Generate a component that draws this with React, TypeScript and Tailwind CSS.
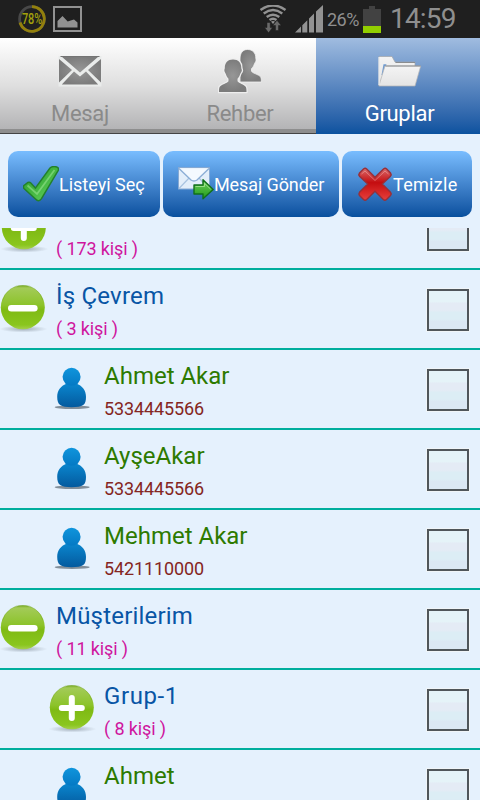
import type { ReactNode } from "react"

type Row = {
  kind: "plus" | "minus" | "person"
  title: string
  sub: string
  nested?: boolean
}

const rows: Row[] = [
  { kind: "plus", title: "", sub: "( 173 kişi )" },
  { kind: "minus", title: "İş Çevrem", sub: "( 3 kişi )" },
  { kind: "person", title: "Ahmet Akar", sub: "5334445566", nested: true },
  { kind: "person", title: "AyşeAkar", sub: "5334445566", nested: true },
  { kind: "person", title: "Mehmet Akar", sub: "5421110000", nested: true },
  { kind: "minus", title: "Müşterilerim", sub: "( 11 kişi )" },
  { kind: "plus", title: "Grup-1", sub: "( 8 kişi )", nested: true },
  { kind: "person", title: "Ahmet", sub: "", nested: true },
]

// Gradients shared by all the icons
const Defs = () => (
  <svg width="0" height="0" className="absolute">
    <defs>
      <linearGradient id="green" x1="0" y1="0" x2="0" y2="1">
        <stop offset="0" stopColor="#72a51c" />
        <stop offset="0.06" stopColor="#a3cb58" />
        <stop offset="0.45" stopColor="#8cc32a" />
        <stop offset="0.55" stopColor="#7fba14" />
        <stop offset="0.9" stopColor="#8ac61e" />
        <stop offset="1" stopColor="#a5d04e" />
      </linearGradient>
      <linearGradient id="blue" x1="0" y1="0" x2="0" y2="1">
        <stop offset="0" stopColor="#0a86ce" />
        <stop offset="1" stopColor="#045a9e" />
      </linearGradient>
      <linearGradient id="head" x1="0" y1="0" x2="0" y2="1">
        <stop offset="0" stopColor="#0f95dc" />
        <stop offset="1" stopColor="#0579c4" />
      </linearGradient>
      <linearGradient id="check" x1="0" y1="0" x2="1" y2="1">
        <stop offset="0" stopColor="#2f9f2f" />
        <stop offset="0.5" stopColor="#43b541" />
        <stop offset="1" stopColor="#6bd866" />
      </linearGradient>
      <linearGradient id="arrow" x1="0" y1="0" x2="0" y2="1">
        <stop offset="0" stopColor="#6fd05a" />
        <stop offset="1" stopColor="#1f9a1c" />
      </linearGradient>
      <linearGradient id="red" x1="0" y1="0" x2="0" y2="1">
        <stop offset="0" stopColor="#d96a6a" />
        <stop offset="0.45" stopColor="#c40d10" />
        <stop offset="1" stopColor="#e8403c" />
      </linearGradient>
      <linearGradient id="paper" x1="0" y1="0" x2="0" y2="1">
        <stop offset="0" stopColor="#f4f4f4" />
        <stop offset="1" stopColor="#e4e4e4" />
      </linearGradient>
      <radialGradient id="shadow">
        <stop offset="0" stopColor="#5c6874" stopOpacity="0.5" />
        <stop offset="1" stopColor="#5c6874" stopOpacity="0" />
      </radialGradient>
      <radialGradient id="gray">
        <stop offset="0" stopColor="#979797" />
        <stop offset="1" stopColor="#7c7c7c" />
      </radialGradient>
    </defs>
  </svg>
)

const Circle = ({ plus }: { plus?: boolean }) => (
  <svg width="48" height="48" viewBox="0 0 48 48">
    <ellipse cx="23.5" cy="44" rx="24" ry="3.5" fill="url(#shadow)" />
    <circle cx="22.8" cy="22.3" r="22" fill="url(#green)" />
    <path d="M2.5 15.5A21 21 0 0 1 43 15.5" fill="none" stroke="#6d9f1d" strokeOpacity="0.45" strokeWidth="0.8" />
    {plus ? (
      <path d="M22.8 13v20M12.8 23h20" stroke="#fff" strokeWidth="6" strokeLinecap="round" />
    ) : (
      <path d="M11.3 23.3h23" stroke="#fff" strokeWidth="6.6" strokeLinecap="round" />
    )}
  </svg>
)

const Person = () => (
  <svg width="48" height="48" viewBox="0 0 48 48">
    <ellipse cx="24.2" cy="42.3" rx="17.5" ry="1.7" fill="#4f5b66" opacity="0.65" />
    <path
      d="M19 18.5c-6 2-9.800 7-9.800 13.200 0 3.800.8 6.800 3 8.300 2.200 1.700 6 2.200 11.400 2.200s9.400-.5 11.600-2.200c2.200-1.500 2.800-4.500 2.800-8.300 0-6.200-3.800-11.200-9.800-13.200z"
      fill="url(#blue)"
    />
    <circle cx="23.6" cy="11.8" r="9" fill="url(#head)" />
  </svg>
)

const CheckMark = () => (
  <svg width="36" height="36" viewBox="0 0 36 36">
    <path
      d="M.9 19.5 5 16.5q1.500-.8 2.800.6l4.600 5L27 2q3.500-2.600 7.500-.6 1.700 1.200.6 3.200L18.500 32.600q-2.800 4-6 .4L1 22.500q-1.200-1.600-.1-3z"
      fill="url(#check)"
      stroke="#23802c"
      strokeWidth="1.5"
    />
    <path d="M4.5 19.5 14 28 31.500 4" fill="none" stroke="#a5eb9d" strokeOpacity="0.5" strokeWidth="1.8" />
  </svg>
)

const SendMail = () => (
  <svg width="36" height="36" viewBox="0 0 36 36">
    <rect x="0.5" y="1.5" width="31" height="21.5" fill="#e3eefa" stroke="#86a9d3" />
    <path d="M1 22.5 12 11M31 22.500 20 11" stroke="#a9c3e0" strokeWidth="1.2" />
    <path d="M1 2.5 13 14q3 2 6 0L31 2.500" fill="#f4f9ff" stroke="#8caed6" strokeWidth="1.4" />
    <path
      d="M16 19h9v-5.200L35.200 23.500 25 32.800V28h-9z"
      fill="url(#arrow)"
      stroke="#116f1b"
      strokeWidth="1.4"
      strokeLinejoin="round"
    />
    <path d="M17.5 20.5h9v-3.200l6 5.700" fill="none" stroke="#b4eca4" strokeOpacity="0.7" />
  </svg>
)

const Cross = () => (
  <svg width="36" height="36" viewBox="0 0 36 36">
    <path
      d="M2.500 7 6.500 3q1.600-1.400 3.200 0L18 11.200l8.500-8.200q1.600-1.400 3.200 0l3.800 4q1.200 1.600 0 3.200L25.300 18l8.200 8.300q1.400 1.600 0 3.200l-4 4q-1.600 1.400-3.200 0L18 25.200l-8.300 8.300q-1.600 1.400-3.200 0l-4-4q-1.200-1.600 0-3.200l8.200-8.300-8.200-7.800q-1.200-1.600 0-3.200z"
      fill="url(#red)"
      stroke="#973039"
      strokeWidth="1.4"
    />
    <path d="M4.5 8 8 5l10 9.500L28 5l3.500 3" fill="none" stroke="#f3b4b4" strokeOpacity="0.5" />
  </svg>
)

const MailIcon = () => (
  <svg width="44" height="32" viewBox="0 0 44 32">
    <rect x="0.5" y="1" width="43" height="30.5" fill="#eaeceb" />
    <path
      d="M3.500 1.500h37L22 17.500zM1 4v23.500L14 15zM43 4v23.500L30 15zM16 16.500 3.800 29.500h36.400L28 16.500l-6 5z"
      fill="url(#gray)"
    />
    <path d="M2.5 1.5h39" stroke="#747474" />
  </svg>
)

const PeopleIcon = () => (
  <svg width="44" height="45" viewBox="0 0 44 45" strokeLinejoin="round">
    <path
      d="M29.500.5c5 0 8.300 3.300 8.300 8.500 0 1 .4 1.200.2 2.500-.3 1.600-1 2-1.500 3.200-.8 2.300-1.700 3.800-3 5v2.600c1.500 2.200 7.500 3.200 9.300 5.700.5 1 .6 3.200.6 5H22V10c0-5.800 2.500-9.500 7.500-9.500z"
      fill="url(#gray)"
      stroke="#f2f2f2"
      strokeWidth="0.8"
    />
    <path
      d="M15 10.500c5.300 0 8.300 3.200 8.300 8.500 0 1 .7 1.200.5 2.700-.3 1.500-1.200 2-1.600 3.200-.7 2.200-1.500 3.600-2.700 4.800v2.600c1.500 2.200 6.500 3 8.200 5.500.8 1.200.8 3.400.8 5.200H1c0-1.800 0-4 .8-5.200 1.700-2.500 7.200-3.300 8.700-5.500v-2.600C9.300 28.500 8.500 27.100 7.800 24.900c-.4-1.200-1.200-1.700-1.400-3.200-.2-1.500.4-1.700.4-2.700 0-5.300 3-8.500 8.200-8.500z"
      fill="url(#gray)"
      stroke="#eeeeee"
      strokeWidth="2.6"
      paintOrder="stroke"
    />
  </svg>
)

const FolderIcon = () => (
  <svg width="44" height="32" viewBox="0 0 44 32" strokeLinejoin="round">
    <path d="M1 30.500V1.500h13l3 5.500h20v22z" fill="url(#paper)" stroke="#a2a5a8" strokeWidth="0.7" />
    <path d="M17.5 7.500H37" stroke="#8b8d8f" />
    <path d="M3.5 20 5.500 9.300h3L5 20z" fill="#6f9bd0" />
    <path d="M.8 31 7 11h35.700L37 31z" fill="url(#paper)" stroke="#b4b4b4" strokeWidth="0.7" />
    <path d="M7.5 11h35" stroke="#8b8d8f" />
    <path d="M1 2v28" stroke="#fff" />
  </svg>
)

const StatusBar = () => (
  <div className="flex h-[38px] items-center bg-[#1f1f1f] text-[#8f8f8f]">
    <div className="relative ml-[18px] h-7 w-7">
      <svg width="28" height="28" viewBox="0 0 28 28" fill="none" strokeWidth="2.8">
        <circle cx="14" cy="14" r="12.4" stroke="#484848" />
        <path d="M14 1.600A12.400 12.400 0 1 1 2 17.500" stroke="#93800c" />
      </svg>
      <span className="absolute inset-0 flex items-center justify-center">
        <span className="scale-x-[0.78] text-[14px] leading-none font-medium text-[#a3a20b]">78%</span>
      </span>
    </div>
    <svg width="29" height="26" viewBox="0 0 29 26" className="ml-[7px]">
      <rect x="1" y="1" width="27" height="24" fill="none" stroke="#929292" strokeWidth="2" />
      <path d="M4.500 21.500V15l5-5 5.200 5.500 3-1 3.300-1 3.500 3v5z" fill="#929292" />
    </svg>
    <svg width="28" height="28" viewBox="0 0 28 28" fill="none" stroke="#929292" strokeWidth="2.4" className="ml-[177px]">
      <path d="M1.500 5Q14-4 26.500 5M4.700 8.500q9.300-6.800 18.600 0M7.700 12q6.300-4.600 12.600 0M10.500 15q3.500-2.500 7 0" />
      <path d="M12 16.500q2-1.200 4 0l-2 2.500z" fill="#929292" stroke="none" />
      <path
        d="M8 17.500h3.200v5h2.300l-3.900 5.300-4-5.300H8zM16.500 25.500v-5h-2.700l4.200-5.200 4.200 5.200h-2.700v5z"
        fill="#696969"
        stroke="#1f1f1f"
        strokeWidth="0.5"
      />
    </svg>
    <svg width="28" height="28" viewBox="0 0 28 28" className="ml-2">
      <path
        d="M0 27.500 6 21.500v6zM7.300 20.200 12.300 15.200v12.300h-5zM14 13.500l5-5v19h-5zM21 6.500 28 0v27.500h-7z"
        fill="#929292"
      />
    </svg>
    <span className="ml-1 w-[33px] text-[18px] tracking-[-0.5px]">26%</span>
    <svg width="18" height="27" viewBox="0 0 18 27" className="ml-[3px]">
      <path d="M6 0h6v3h6v24H0V3h6z" fill="#424242" />
      <path d="M0 20h18v7H0z" fill="#92ce00" />
    </svg>
    <span className="ml-[9px] text-[28px] leading-[38px] tracking-[-0.8px]">14:59</span>
  </div>
)

const Tab = ({ label, active, children }: { label: string; active?: boolean; children: ReactNode }) => (
  <div
    className={
      active
        ? "-ml-1 flex h-24 flex-col items-center bg-linear-to-b from-[#a0bce0] to-[#0a529f] pl-1 text-white"
        : "flex h-24 flex-col items-center border-b border-[#444] bg-linear-to-b from-white via-[#dfdfdf] to-[#b0b0b2] text-[#8a8a8a] shadow-[inset_0_-4px_0_#8e8e8e]"
    }
  >
    <div className="flex h-[63px] items-center justify-center pt-[3px]">{children}</div>
    <span className={`text-[22px] leading-[26px] tracking-[-0.3px] ${active ? "-ml-px" : ""}`}>{label}</span>
  </div>
)

const ActionButton = ({ label, className, children }: { label: string; className: string; children: ReactNode }) => (
  <button
    className={`flex h-[66px] items-center rounded-[10px] bg-linear-to-b from-[#79bdff] to-[#07509e] pl-[15px] text-[18px] whitespace-nowrap text-white ${className}`}
  >
    {children}
    <span className="mt-px">{label}</span>
  </button>
)

const ListRow = ({ kind, title, sub, nested }: Row) => (
  <div className={`flex h-20 shrink-0 border-b-2 border-[#00ae9d] ${nested ? "pl-12" : ""}`}>
    <div className={`w-14 shrink-0 pt-[15px] ${kind === "plus" ? "pl-px" : ""}`}>
      {kind === "person" ? <Person /> : <Circle plus={kind === "plus"} />}
    </div>
    <div className="flex-1 pt-3">
      <p
        className={`h-7 text-[24px] leading-7 ${kind === "person" ? "text-[#2d7a00]" : nested ? "tracking-[0.6px] text-[#0855a5]" : "tracking-[0.2px] text-[#0855a5]"}`}
      >
        {title}
      </p>
      <p
        className={`mt-2 text-[18px] leading-[21px] tracking-[-0.12px] ${kind === "person" ? "text-[#842622]" : "text-[#cf159e]"}`}
      >
        {sub}
      </p>
    </div>
    <div className="mt-[19px] mr-[11px] h-[42px] w-[42px] border-2 border-[#50565a] bg-[linear-gradient(#e5f3f8_0_28%,#e4ebf5_32%_50%,#dcedf5_56%_74%,#dbe7f3_80%)] shadow-[0_0_0_1px_#f0f5f8]" />
  </div>
)

export default function App() {
  return (
    <div className="h-[800px] w-[480px] overflow-hidden bg-[#e5f1fd] font-[Roboto,sans-serif]">
      <Defs />
      <StatusBar />
      <div className="grid grid-cols-3">
        <Tab label="Mesaj">
          <MailIcon />
        </Tab>
        <Tab label="Rehber">
          <PeopleIcon />
        </Tab>
        <Tab label="Gruplar" active>
          <FolderIcon />
        </Tab>
      </div>
      <div className="flex h-[94px] gap-[3px] px-2 pt-[17px]">
        <ActionButton label="Listeyi Seç" className="w-[152px]">
          <CheckMark />
        </ActionButton>
        <ActionButton label="Mesaj Gönder" className="w-[176px] tracking-[-0.1px]">
          <SendMail />
        </ActionButton>
        <ActionButton label="Temizle" className="w-[130px] tracking-[0.3px]">
          <Cross />
        </ActionButton>
      </div>
      <div className="flex h-[572px] flex-col overflow-hidden">
        <div className="-mt-[38px] flex flex-col">
          {rows.map((row, i) => (
            <ListRow key={i} {...row} />
          ))}
        </div>
      </div>
    </div>
  )
}
